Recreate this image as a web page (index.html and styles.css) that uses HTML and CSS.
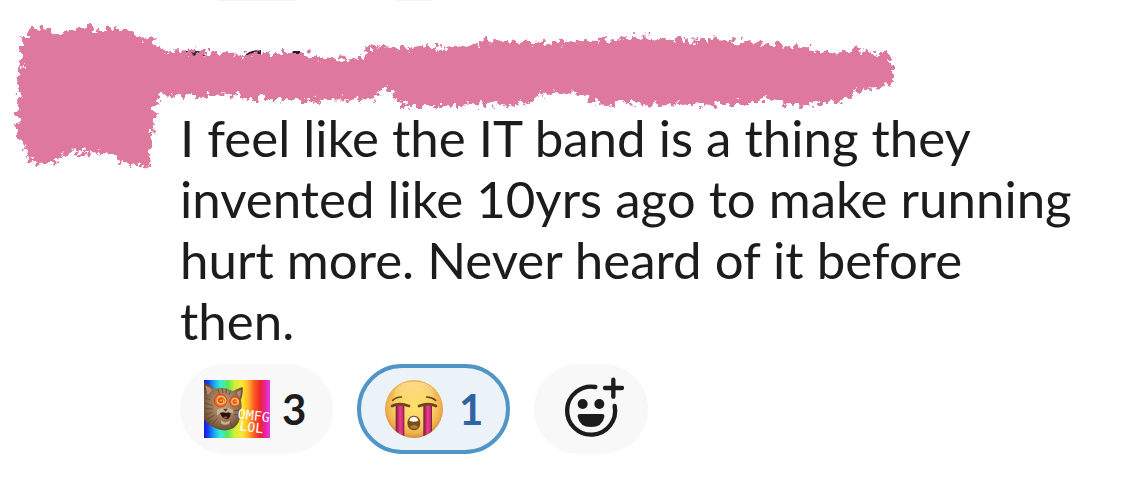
FILE: index.html
```html
<!DOCTYPE html>
<html lang="en">
<head>
<meta charset="utf-8">
<meta name="viewport" content="width=device-width, initial-scale=1">
<title>Message</title>
<link rel="stylesheet" href="styles.css">
</head>
<body>
<article class="message">
  <svg class="scribble" width="920" height="180" viewBox="0 0 920 180" aria-hidden="true">
    <defs>
      <filter id="rough" x="-5%" y="-15%" width="110%" height="130%" color-interpolation-filters="sRGB">
        <feTurbulence type="fractalNoise" baseFrequency="0.17" numOctaves="3" seed="7" result="noise"/>
        <feDisplacementMap in="SourceGraphic" in2="noise" scale="17" xChannelSelector="R" yChannelSelector="G"/>
        <feGaussianBlur stdDeviation="0.7"/>
      </filter>
    </defs>
    <path d="M218 0H296M395 0H432" stroke="#f2f2f2" stroke-width="2"/>
    <path d="M184 51H198Q204 52 205 56H190ZM245 56Q248 50 261 50V55ZM293 51H300V55H291Z" fill="#241f22"/>
    <path class="paint" filter="url(#rough)" d="M22 40L32 30 43 29 55 34 70 32 82 28 90 26 97 32 115 29 130 32 138 40 152 39 156 44 158 51 170 52 205 53 240 55 270 54 300 54 320 58 345 60 366 58 369 47 385 47 400 50 420 47 455 49 472 45 490 41 505 42 530 44 560 43 585 42 620 41 630 38 660 39 700 42 712 39 740 43 770 44 790 47 812 50 820 54 840 53 857 50 870 54 885 54 891 61 893 75 892 83 880 86 865 87 850 94 838 102 820 102 805 105 785 102 765 97 750 103 730 103 700 104 680 102 660 105 640 104 625 100 605 106 592 99 580 93 560 92 540 93 530 101 510 105 480 102 460 105 440 105 405 105 395 98 393 90 385 88 375 95 360 99 340 98 320 100 300 99 270 98 250 98 235 94 200 95 180 95 158 94 155 105 152 125 150 145 148 165 130 163 118 160 115 154 90 151 65 152 55 160 45 163 30 160 25 145 17 135 19 115 20 80 22 60Z"/>
  </svg>

  <p class="text">I feel like the IT band is a thing they invented like 10yrs ago to make running hurt more. Never heard of it before then.</p>

  <div class="reactions">
    <button class="pill" type="button" aria-label="OMFG LOL cat, 3 reactions">
      <svg class="emoji" viewBox="102 75 198 174" aria-hidden="true">
        <defs>
          <linearGradient id="rainbow">
            <stop offset="0" stop-color="#1b14dc"/>
            <stop offset=".07" stop-color="#1746ee"/>
            <stop offset=".15" stop-color="#18a4f4"/>
            <stop offset=".25" stop-color="#35eddc"/>
            <stop offset=".36" stop-color="#55ea58"/>
            <stop offset=".46" stop-color="#cdf03a"/>
            <stop offset=".58" stop-color="#ffe52e"/>
            <stop offset=".67" stop-color="#ffb62a"/>
            <stop offset=".76" stop-color="#f95a20"/>
            <stop offset=".86" stop-color="#ee2430"/>
            <stop offset=".93" stop-color="#e426a4"/>
            <stop offset="1" stop-color="#e838e6"/>
          </linearGradient>
          <radialGradient id="fur" cx=".5" cy=".45" r=".6">
            <stop offset="0" stop-color="#c0a382"/>
            <stop offset=".6" stop-color="#967554"/>
            <stop offset="1" stop-color="#5e422c"/>
          </radialGradient>
          <clipPath id="frame"><path d="M102 75H300V249H102Z"/></clipPath>
        </defs>
        <path fill="url(#rainbow)" d="M102 75H300V249H102Z"/>
        <g clip-path="url(#frame)">
          <path fill="url(#fur)" d="M102 83Q112 83 136 101Q160 93 188 108Q204 101 218 96Q219 120 213 134Q217 152 212 172Q212 205 190 220Q165 232 140 221Q115 212 102 193Z"/>
          <path fill="#b58a78" d="M106 91Q120 97 127 106L113 121ZM200 112L213 104Q214 119 208 128Z"/>
          <g fill="none" stroke="#5a412c" stroke-width="3" stroke-linecap="round" opacity=".7">
            <path d="M143 103L148 116M156 101L159 113M169 103L168 115M181 109L177 119M107 130L119 134M105 145L126 151M105 160L127 162M107 177L126 173M114 191L132 181M127 207L142 191M207 165L194 167M207 180L192 178M185 212L179 197"/>
          </g>
          <path fill="#ccb393" d="M141 165Q162 150 188 164L190 176Q180 170 166 173Q151 171 141 181Z"/>
          <path fill="#c9b08f" d="M152 196Q167 207 181 196L177 207Q164 212 154 206Z"/>
          <path fill="#25130f" d="M150 174Q159 170 167 174Q175 170 182 175Q181 190 171 193Q155 190 150 174Z"/>
          <path fill="#ae514a" d="M160 186Q169 182 173 188Q167 192 160 186Z"/>
          <path fill="#67392f" d="M159 161H174L167 170Z"/>
          <circle cx="152" cy="137" r="20" fill="#ed6d26"/>
          <circle cx="194" cy="140" r="16" fill="#ed6d26"/>
          <g fill="none" stroke="#ffbd62" stroke-width="4">
            <path d="M152 137q5-7 9 1t-9 9q-13-2-10-14t17-8q13 7 7 20M194 140q4-6 8 1t-8 8q-10-2-8-11t13-7q10 5 5 17"/>
          </g>
          <g fill="none" stroke="#bc3419" stroke-width="2">
            <circle cx="152" cy="137" r="19"/><circle cx="194" cy="140" r="15"/>
            <circle cx="152" cy="137" r="6"/><circle cx="194" cy="140" r="5"/>
          </g>
        </g>
        <g class="caption" transform="rotate(7 203 190)">
          <text x="202" y="190">OMFG</text>
          <text x="211" y="225">LOL</text>
        </g>
      </svg>
      <span class="count">3</span>
    </button>

    <button class="pill pill-active" type="button" aria-pressed="true" aria-label="Sobbing face, 1 reaction">
      <svg class="emoji" viewBox="92 73 198 174" aria-hidden="true">
        <defs>
          <radialGradient id="face" cx=".5" cy=".46" r=".54">
            <stop offset="0" stop-color="#ffe06e"/>
            <stop offset=".6" stop-color="#fbcf60"/>
            <stop offset=".86" stop-color="#efb04e"/>
            <stop offset="1" stop-color="#d5883d"/>
          </radialGradient>
          <linearGradient id="shine" x2="0" y2="1">
            <stop offset="0" stop-color="#ffeaa8" stop-opacity=".7"/>
            <stop offset="1" stop-color="#ffe080" stop-opacity="0"/>
          </linearGradient>
          <linearGradient id="tears">
            <stop offset="0" stop-color="#652339"/>
            <stop offset=".22" stop-color="#ad245e"/>
            <stop offset=".5" stop-color="#ee3e91"/>
            <stop offset=".78" stop-color="#d52c76"/>
            <stop offset="1" stop-color="#652339"/>
          </linearGradient>
          <clipPath id="disc"><circle cx="191" cy="160" r="86"/></clipPath>
        </defs>
        <circle cx="191" cy="160" r="87" fill="url(#face)"/>
        <ellipse cx="191" cy="112" rx="60" ry="34" fill="url(#shine)"/>
        <g clip-path="url(#disc)">
          <path fill="url(#tears)" d="M136 151Q149 144 162 151V260H136Z"/>
          <path fill="url(#tears)" d="M219 151Q232 144 245 151V260H219Z"/>
        </g>
        <g fill="none" stroke="#68461a" stroke-linecap="round">
          <path stroke-width="5" d="M127 134Q136 125 153 124M229 124Q246 125 256 134"/>
          <path stroke-width="8" d="M125 151Q146 140 176 151M206 151Q235 140 257 151"/>
        </g>
        <path fill="#76501c" d="M191 180Q209 181 210 201Q210 223 191 224Q171 223 171 201Q173 181 191 180Z"/>
        <path fill="#b77b31" d="M178 215Q191 200 204 215Q191 224 178 215Z"/>
        <path fill="#fff" d="M177 195Q178 184 191 183Q203 184 204 195Q191 201 177 195Z"/>
      </svg>
      <span class="count">1</span>
    </button>

    <button class="pill" type="button" aria-label="Add reaction">
      <svg class="add" viewBox="99 63 198 198" aria-hidden="true">
        <g fill="none" stroke="#1d1c1d" stroke-width="13" stroke-linecap="round">
          <path d="M211 96A72 72 0 1 0 269 153"/>
          <path d="M265 74V125M240 99H291"/>
        </g>
        <g fill="#1d1c1d">
          <circle cx="173" cy="147" r="15"/>
          <circle cx="223" cy="147" r="15"/>
          <path d="M165 177H231Q239 177 238 185Q232 216 198 216Q164 216 158 185Q157 177 165 177Z"/>
        </g>
      </svg>
    </button>
  </div>
</article>
</body>
</html>
```
FILE: styles.css
```css
body {
  margin: 0;
  background: #fff;
  color: #1d1c1d;
  font-family: Lato, "Liberation Sans", sans-serif;
}

.message {
  position: relative;
  padding: 107px 44px 42px 180px;
}

.scribble {
  position: absolute;
  top: 0;
  left: 0;
}

.paint {
  fill: #de789d;
  stroke: #de789d;
  stroke-width: 2px;
}

.text {
  position: relative;
  margin: 0;
  font-size: 51px;
  line-height: 61px;
}

.reactions {
  display: flex;
  flex-wrap: wrap;
  gap: 24px;
  margin-top: 13px;
}

.pill {
  display: flex;
  align-items: center;
  gap: 12px;
  box-sizing: border-box;
  min-height: 90px;
  padding: 0 24px;
  border: 0;
  border-radius: 45px;
  background: #f8f8f8;
  color: #1d1c1d;
  font: 700 42px/50px Lato, "Liberation Sans", sans-serif;
  cursor: pointer;
}

.pill-active {
  padding: 0 20px;
  border: 4px solid #4f96c6;
  background: #ebf3f9;
  color: #2f64a0;
}

.emoji {
  width: 66px;
  height: 58px;
}

.caption {
  fill: #fff;
  font: 400 40px "DejaVu Sans Mono", monospace;
}

.count {
  min-width: 27px;
  text-align: left;
}

.add {
  width: 66px;
  height: 66px;
}
```
